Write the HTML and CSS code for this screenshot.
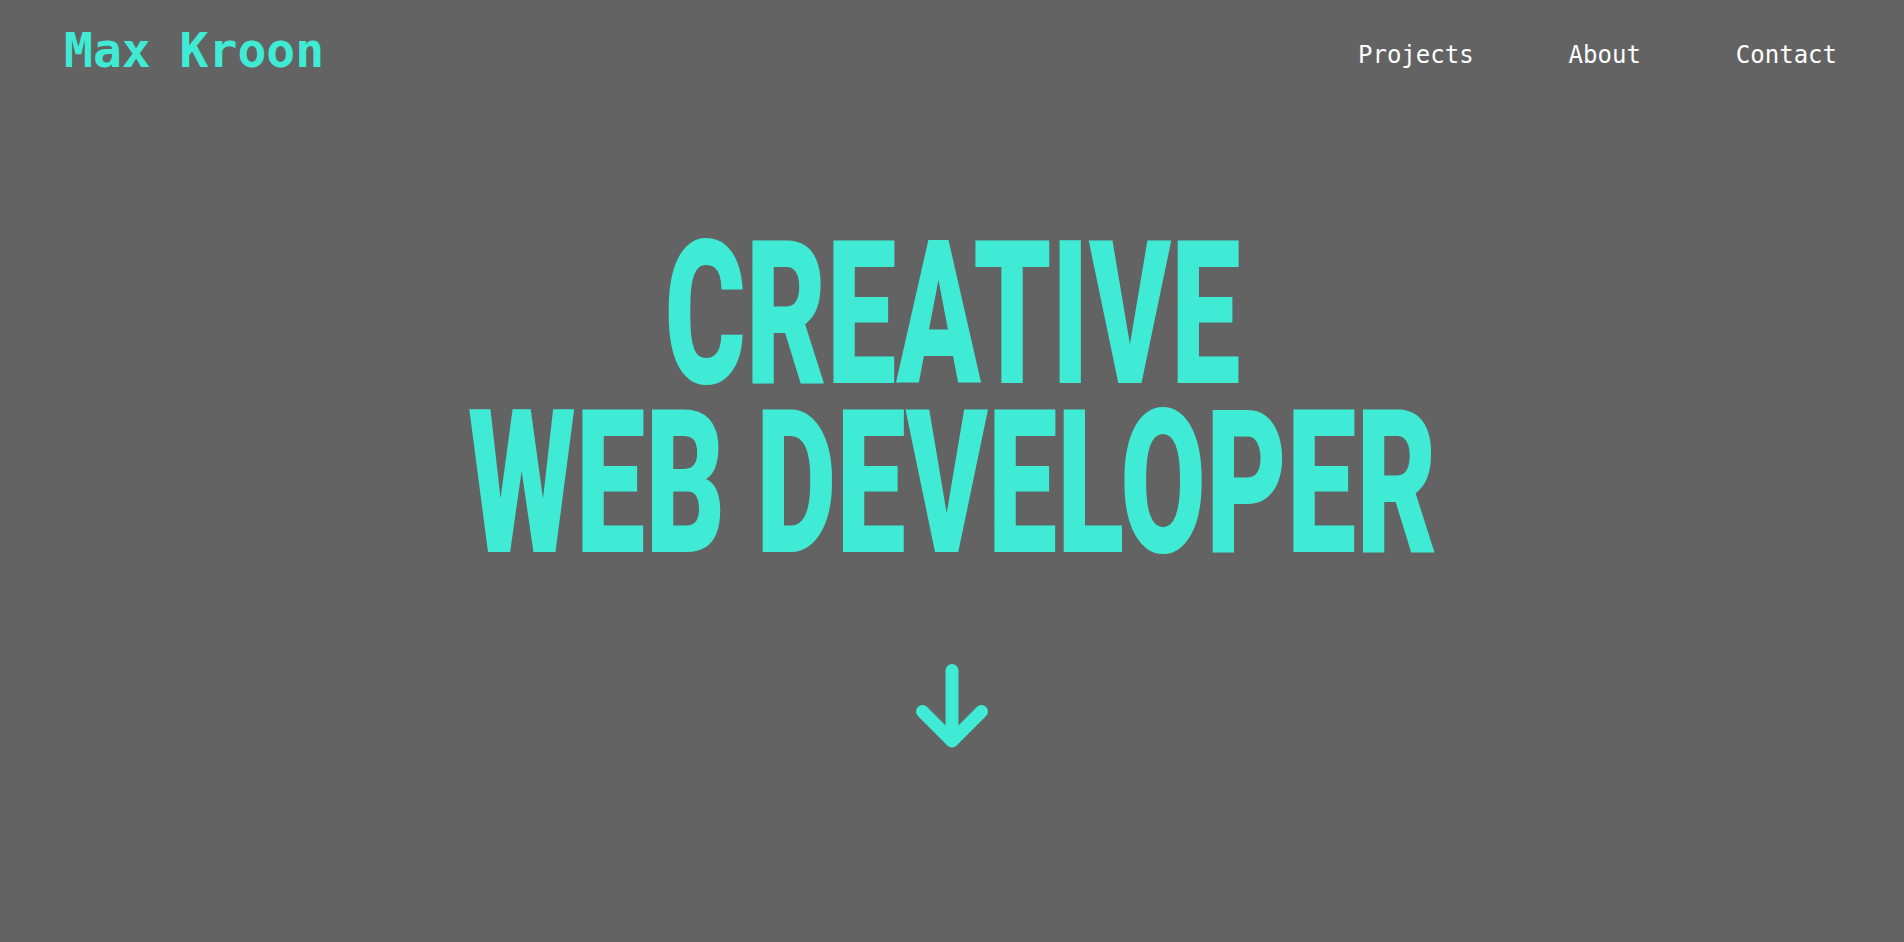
FILE: index.html
```html
<!DOCTYPE html>
<html lang="en">
<head>
<meta charset="utf-8">
<title>Max Kroon</title>
<link rel="stylesheet" href="styles.css">
</head>
<body>
<header class="site-header">
  <a class="logo" href="#">Max Kroon</a>
  <nav class="nav">
    <a class="nav-link" href="#">Projects</a>
    <a class="nav-link" href="#">About</a>
    <a class="nav-link" href="#">Contact</a>
  </nav>
</header>
<main class="hero">
  <h1 class="headline">
    <span class="line"><span class="squeeze">CREATIVE</span></span>
    <span class="line"><span class="squeeze">WEB DEVELOPER</span></span>
  </h1>
  <a class="scroll-down" href="#" aria-label="Scroll down">
    <svg width="72" height="84" viewBox="0 0 72 84" fill="none" stroke="currentColor" stroke-width="13" stroke-linecap="round" stroke-linejoin="round">
      <line x1="36" y1="6.5" x2="36" y2="76"/>
      <polyline points="6.5,47.5 36,77 65.5,47.5"/>
    </svg>
  </a>
</main>
</body>
</html>
```

FILE: styles.css
```css
* { box-sizing: border-box; }
html, body {
  margin: 0;
  padding: 0;
  background: #636363;
  height: 100%;
}
body {
  font-family: "DejaVu Sans Mono", "Liberation Mono", monospace;
  color: #ffffff;
  overflow: hidden;
}
a { text-decoration: none; }

.site-header {
  display: flex;
  justify-content: space-between;
  align-items: flex-start;
  padding: 22px 67px 0 64px;
}
.logo {
  font-family: "DejaVu Sans Mono", monospace;
  font-weight: bold;
  font-size: 48px;
  line-height: 56px;
  color: #40ebd5;
}
.nav {
  display: flex;
  gap: 95px;
  margin-top: 21px;
}
.nav-link {
  font-family: "DejaVu Sans Mono", monospace;
  font-size: 24px;
  line-height: 24px;
  color: #ffffff;
}

.hero {
  display: flex;
  flex-direction: column;
  align-items: center;
}
.headline {
  margin: 152px 0 0;
  font-family: Roboto, "Liberation Sans", sans-serif;
  font-weight: 900;
  font-size: 200px;
  line-height: 169px;
  color: #40ebd5;
  text-align: center;
  letter-spacing: 0;
}
.line { display: block; white-space: nowrap; }
.squeeze {
  display: inline-block;
  transform: scaleX(0.62);
  transform-origin: center;
}
.scroll-down {
  display: block;
  margin-top: 96px;
  color: #40ebd5;
  line-height: 0;
}
```
